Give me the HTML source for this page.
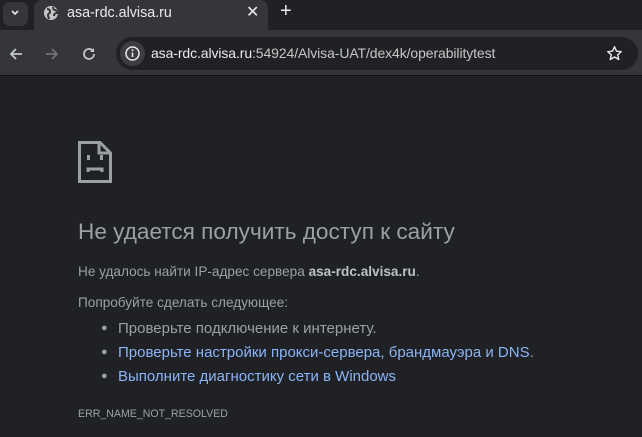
<!DOCTYPE html>
<html><head><meta charset="utf-8"><style>
*{margin:0;padding:0;box-sizing:border-box}
body{width:642px;height:437px;background:#202124;font-family:"Liberation Sans","DejaVu Sans",sans-serif;position:relative;overflow:hidden;color:#9aa0a6}
.abs{position:absolute}
#strip{left:0;top:0;width:642px;height:30px;background:#202124}
#tabbtn{left:3px;top:2px;width:25px;height:24px;background:#35363a;border-radius:7px}
#tab{left:34px;top:0;width:234px;height:30px;background:#35363a;border-radius:8px 8px 0 0}
#toolbar{left:0;top:30px;width:642px;height:46px;background:#35363a;border-bottom:1px solid #111}
#omni{left:116px;top:37px;width:522px;height:33px;background:#202124;border-radius:17px}
#info{left:120px;top:41px;width:25px;height:25px;border-radius:50%;background:#3c3d40}
.url{left:151px;top:45px;font-size:14px;color:#e8eaed;letter-spacing:-0.1px}
.page{left:78px}
h1{font-weight:normal;font-size:22.6px;color:#9aa0a6}
p{font-size:13.6px}
li{font-size:15px}
a{color:#8ab4f8;text-decoration:none}
</style></head><body>
<div class="abs" id="strip"></div>
<div class="abs" id="tabbtn"></div>
<svg class="abs" style="left:9px;top:8px" width="12" height="10"><path d="M3 3l3 3 3-3" stroke="#e8eaed" stroke-width="1.6" fill="none"/></svg>
<div class="abs" id="tab"></div>
<svg class="abs" style="left:43px;top:5px" width="16" height="16" viewBox="0 0 16 16"><circle cx="8" cy="8" r="7" fill="#c4c7c5"/><path d="M4 4c2 0 3 1 3 3s-2 1-2 3 1 3 1 4M10 2c0 2 1 3 2 3s2 1 2 3c-2 0-3 1-3 3" stroke="#35363a" stroke-width="2" fill="none"/></svg>
<div class="abs" style="left:67px;top:5px;font-size:14.3px;color:#e8eaed">asa-rdc.alvisa.ru</div>
<div class="abs" style="left:246px;top:2px;font-size:16px;color:#e8eaed">✕</div>
<div class="abs" style="left:280px;top:0px;font-size:20px;color:#e8eaed">+</div>
<div class="abs" id="toolbar"></div>
<svg class="abs" style="left:8px;top:46px" width="16" height="16"><path d="M14 8H3M8 3L3 8l5 5" stroke="#c4c7c5" stroke-width="1.8" fill="none"/></svg>
<svg class="abs" style="left:44px;top:46px" width="16" height="16"><path d="M2 8h11M8 3l5 5-5 5" stroke="#6f7174" stroke-width="1.8" fill="none"/></svg>
<svg class="abs" style="left:81px;top:46px" width="16" height="16"><path d="M13 8a5 5 0 1 1-1.5-3.6" stroke="#c4c7c5" stroke-width="1.8" fill="none"/><path d="M13 2v4h-4z" fill="#c4c7c5"/></svg>
<div class="abs" id="omni"></div>
<div class="abs" id="info"></div>
<svg class="abs" style="left:124px;top:45px" width="17" height="17"><circle cx="8.5" cy="8.5" r="6.5" stroke="#e8eaed" stroke-width="1.5" fill="none"/><path d="M8.5 7.5v4.5" stroke="#e8eaed" stroke-width="1.6"/><circle cx="8.5" cy="5.3" r="1" fill="#e8eaed"/></svg>
<div class="abs url">asa-rdc.alvisa.ru<span style="color:#c4c7c5">:54924/Alvisa-UAT/dex4k/operabilitytest</span></div>
<svg class="abs" style="left:606px;top:45px" width="17" height="17" viewBox="0 0 24 24"><path d="M12 2.5l2.9 6.2 6.6.7-5 4.5 1.5 6.6L12 17l-6 3.5 1.5-6.6-5-4.5 6.6-.7z" stroke="#e8eaed" stroke-width="2" fill="none" stroke-linejoin="round"/></svg>
<svg class="abs" style="left:78px;top:141px" width="34" height="42"><path d="M1.5 1.5H22L32.5 12V40.5H1.5Z" stroke="#9aa0a6" stroke-width="3" fill="none"/><path d="M21 2V12H32" stroke="#9aa0a6" stroke-width="3" fill="none"/><rect x="9" y="14" width="3" height="5" fill="#9aa0a6"/><rect x="22" y="14" width="3" height="5" fill="#9aa0a6"/><path d="M10 31v-3h14v3" stroke="#9aa0a6" stroke-width="3" fill="none"/></svg>
<h1 class="abs page" style="top:219px">Не удается получить доступ к сайту</h1>
<p class="abs page" style="top:264px">Не удалось найти IP-адрес сервера <b style="color:#bdc1c6">asa-rdc.alvisa.ru</b>.</p>
<p class="abs page" style="top:295px">Попробуйте сделать следующее:</p>
<ul class="abs" style="left:118px;top:320px;list-style:none">
<li style="height:24px;position:relative"><span style="position:absolute;left:-17px;font-size:11px;top:2px">●</span>Проверьте подключение к интернету.</li>
<li style="height:24px;position:relative"><span style="position:absolute;left:-17px;font-size:11px;top:2px">●</span><a>Проверьте настройки прокси-сервера, брандмауэра и DNS</a>.</li>
<li style="height:24px;position:relative"><span style="position:absolute;left:-17px;font-size:11px;top:2px">●</span><a>Выполните диагностику сети в Windows</a></li>
</ul>
<div class="abs page" style="top:408px;font-size:10.6px">ERR_NAME_NOT_RESOLVED</div>
</body></html>
